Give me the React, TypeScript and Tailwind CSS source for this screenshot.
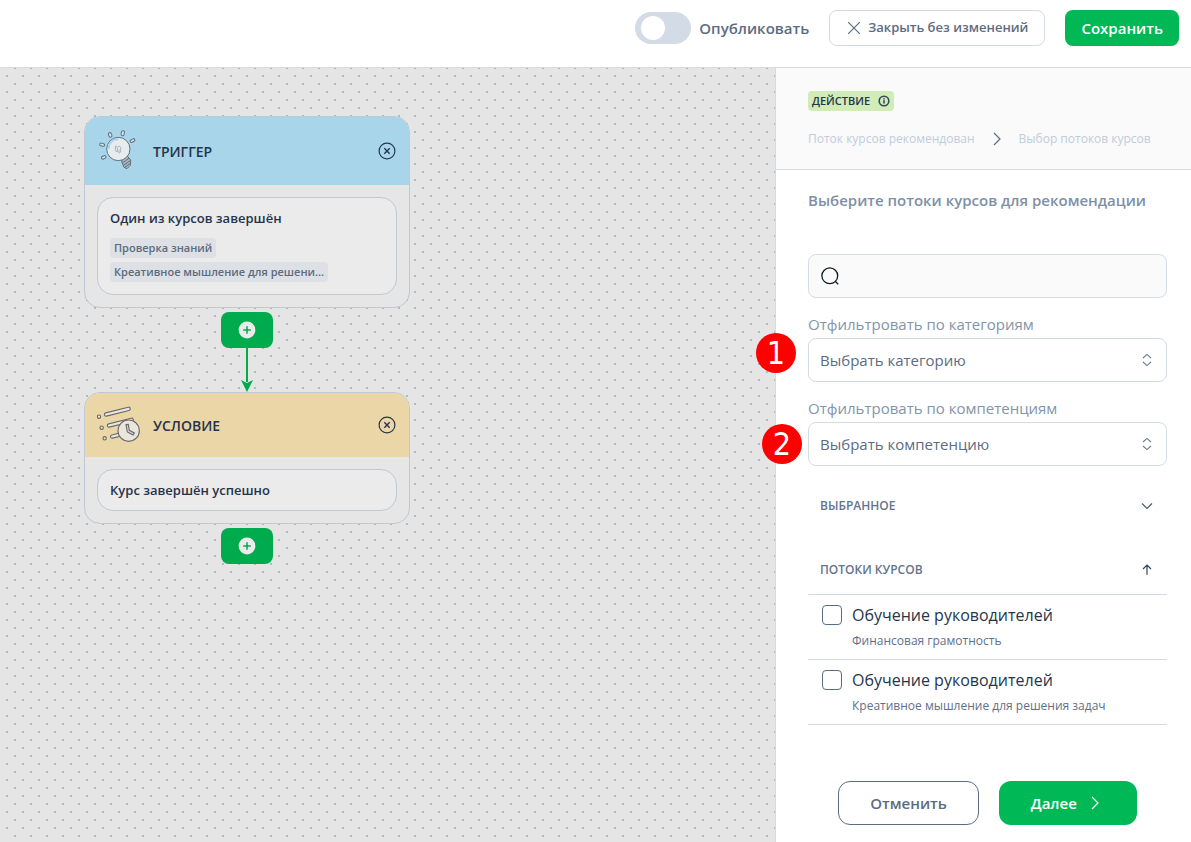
import { useState } from "react";
import type { ReactNode } from "react";

const CATEGORIES = ["Выбрать категорию"];
const COMPETENCIES = ["Выбрать компетенцию"];

const COURSE_FLOWS = [
  { id: "finance", title: "Обучение руководителей", course: "Финансовая грамотность" },
  { id: "creative", title: "Обучение руководителей", course: "Креативное мышление для решения задач" },
];

function BulbIcon() {
  return (
    <svg viewBox="51 57 132 132" className="h-11 w-11 shrink-0" fill="none" stroke="#5f7180" strokeWidth="3" aria-hidden="true">
      <path d="M124 152l18-14 10 12-1 16-10 10-9-4z" fill="#a9b4bc" />
      <path d="M127 159l20-14M130 166l21-14M134 172l17-12" />
      <circle cx="115" cy="117" r="35" fill="#e9ecee" />
      <path d="M86 117c0-18 11-29 29-29" stroke="#a9d5ea" strokeWidth="6" />
      <path d="M106 108l6 4v14l-6-4zM112 112l5-4 5 4v14l-5 4M117 119v10" stroke="#a2a8ad" strokeWidth="2.5" />
      <g fill="#d5e5ee">
        <rect x="86" y="68" width="9" height="14" rx="4.5" transform="rotate(-22 90 75)" />
        <rect x="124" y="62" width="9" height="15" rx="4.5" transform="rotate(12 128 69)" />
        <rect x="150" y="88" width="15" height="8" rx="4" transform="rotate(-28 157 92)" />
        <rect x="59" y="100" width="15" height="8" rx="4" transform="rotate(14 66 104)" />
        <rect x="64" y="138" width="14" height="8" rx="4" transform="rotate(-25 71 142)" />
      </g>
    </svg>
  );
}

function ClockIcon() {
  return (
    <svg viewBox="51 54 132 132" className="h-11 w-11 shrink-0" fill="#e9e6de" stroke="#6c6a66" strokeWidth="3.4" aria-hidden="true">
      <rect x="72" y="75" width="80" height="10" rx="5" transform="rotate(-14 112 80)" />
      <rect x="81" y="108" width="80" height="10" rx="5" transform="rotate(-14 121 113)" />
      <rect x="91" y="146" width="40" height="10" rx="5" transform="rotate(-14 111 151)" />
      <circle cx="57" cy="95" r="5" />
      <circle cx="65" cy="128" r="5" />
      <circle cx="74" cy="160" r="5" />
      <circle cx="146" cy="137" r="32" />
      <path d="M138 119l7-1 3 18 15 8-4 6-17-9z" fill="#d5d5d5" />
    </svg>
  );
}

function CloseCircleIcon() {
  return (
    <svg viewBox="0 0 20 20" className="h-5 w-5" fill="none" stroke="#26374b" strokeWidth="1.2" aria-hidden="true">
      <circle cx="10" cy="10" r="7.9" />
      <path d="M7.3 7.3l5.4 5.4M12.7 7.3l-5.4 5.4" strokeWidth="1.4" />
    </svg>
  );
}

function AddButton() {
  return (
    <button
      type="button"
      aria-label="Добавить"
      className="grid h-9 w-13 place-items-center rounded-lg bg-[#00ab4e]"
    >
      <svg viewBox="0 0 18 18" className="h-4.5 w-4.5" aria-hidden="true">
        <circle cx="9" cy="9" r="8.4" fill="#ebebeb" />
        <path d="M9 5.2v7.6M5.2 9h7.6" stroke="#00ab4e" strokeWidth="1.5" />
      </svg>
    </button>
  );
}

type NodeCardProps = {
  title: string;
  icon: ReactNode;
  headerClass: string;
  children: ReactNode;
};

function NodeCard({ title, icon, headerClass, children }: NodeCardProps) {
  return (
    <section className="w-full overflow-hidden rounded-2xl border border-[#bfc8d3] bg-[#e6e6e6]">
      <header className={`flex items-center gap-3 px-3 ${headerClass}`}>
        {icon}
        <h2 className="flex-1 pt-0.5 text-sm leading-5 font-semibold text-[#26334a]">{title}</h2>
        <button type="button" aria-label="Удалить">
          <CloseCircleIcon />
        </button>
      </header>
      <div className="p-3">
        <div className="rounded-2xl border border-[#bfc8d3] bg-[#ebebeb] px-3">{children}</div>
      </div>
    </section>
  );
}

function Canvas() {
  return (
    <main className="relative flex-1 bg-[#e5e5e5]">
      <svg className="absolute inset-0 h-full w-full" aria-hidden="true">
        <defs>
          <pattern id="dots" width="16" height="16" patternUnits="userSpaceOnUse">
            <path d="M6 7h2v2h-2zM14 15h2v1h-2zM14 0h2v1h-2z" fill="#aebac7" />
          </pattern>
        </defs>
        <rect width="100%" height="100%" fill="url(#dots)" />
      </svg>

      <div className="relative ml-21 flex w-[326px] flex-col items-center pt-12">
        <NodeCard title="ТРИГГЕР" icon={<BulbIcon />} headerClass="h-17 bg-[#a9d5ea]">
          <p className="pt-2.5 text-[13px] leading-5 font-semibold text-[#26334a]">Один из курсов завершён</p>
          <ul className="flex flex-col items-start gap-1 pt-2.5 pb-3 text-[11px] leading-5 font-semibold text-[#5b6b80]">
            <li className="rounded bg-[#dde0e5] px-1">Проверка знаний</li>
            <li className="rounded bg-[#dde0e5] px-1">Креативное мышление для решени...</li>
          </ul>
        </NodeCard>
        <div className="pt-1">
          <AddButton />
        </div>
        <svg viewBox="0 0 12 44" className="h-11 w-3" fill="#00ab4e" aria-hidden="true">
          <path d="M5 0h2v34h-2zM0 32l6 3 6-3-6 12z" />
        </svg>
        <NodeCard title="УСЛОВИЕ" icon={<ClockIcon />} headerClass="h-16 bg-[#ebd6a8]">
          <p className="py-2.5 text-[13px] leading-5 font-semibold text-[#26334a]">Курс завершён успешно</p>
        </NodeCard>
        <div className="pt-1">
          <AddButton />
        </div>
      </div>
    </main>
  );
}

type FilterSelectProps = {
  id: string;
  label: string;
  options: string[];
  marker: ReactNode;
};

function FilterSelect({ id, label, options, marker }: FilterSelectProps) {
  return (
    <div className="relative">
      <label htmlFor={id} className="block text-[15px] leading-7 text-[#8494a9]">
        {label}
      </label>
      <div className="relative">
        <select
          id={id}
          className="h-11 w-full appearance-none rounded-lg border border-[#d3dbe7] bg-white px-[11px] text-[15px] text-[#5b6c82]"
        >
          {options.map((option) => (
            <option key={option}>{option}</option>
          ))}
        </select>
        <svg
          viewBox="0 0 16 16"
          className="pointer-events-none absolute top-3.5 right-3 h-4 w-4"
          fill="none"
          stroke="#6b7b90"
          strokeWidth="1.1"
          aria-hidden="true"
        >
          <path d="M4 6l4-3.6L12 6M4 10l4 3.6 4-3.6" />
        </svg>
      </div>
      {marker}
    </div>
  );
}

const MARKER =
  "absolute h-10 w-10 rounded-full bg-[#fe0000] text-center font-['DejaVu_Sans_Condensed','DejaVu_Sans',sans-serif] text-[32px] leading-10 text-white";

function ActionPanel() {
  const [selected, setSelected] = useState<string[]>([]);

  const toggle = (id: string) =>
    setSelected((prev) => (prev.includes(id) ? prev.filter((item) => item !== id) : [...prev, id]));

  return (
    <aside className="relative flex w-[416px] shrink-0 flex-col border-l border-[#d3dbe7] bg-white">
      <div className="border-b border-[#d3dbe7] bg-[#fafafa] pt-[23px] pr-6 pb-5 pl-8">
        <div className="flex h-5 w-fit items-center gap-2 rounded bg-[#d0ecb8] px-1 text-[11px] font-semibold text-[#26334a]">
          ДЕЙСТВИЕ
          <svg viewBox="0 0 12 12" className="h-3 w-3" fill="none" stroke="#33485a" strokeWidth="1.6" aria-hidden="true">
            <circle cx="6" cy="6" r="4.8" />
            <path d="M6 5.2v3.4M6 3.2v1.2" />
          </svg>
        </div>
        <nav className="flex items-center gap-4 pt-[18px] text-xs leading-5 text-[#bfccdc]">
          <a href="#flow">Поток курсов рекомендован</a>
          <svg viewBox="0 0 12 16" className="h-4 w-3" fill="none" stroke="#5b6c82" strokeWidth="1.2" aria-hidden="true">
            <path d="M3 2l6 6-6 6" />
          </svg>
          <a href="#choose">Выбор потоков курсов</a>
        </nav>
      </div>

      <div className="flex-1 pt-[18px] pr-6 pl-8">
        <h1 className="text-[15px] leading-6 font-semibold text-[#7f90a6]">Выберите потоки курсов для рекомендации</h1>

        <div className="relative mt-[42px]">
          <svg
            viewBox="0 0 20 20"
            className="pointer-events-none absolute top-3 left-3 h-5 w-5"
            fill="none"
            stroke="#111820"
            strokeWidth="1.3"
            aria-hidden="true"
          >
            <circle cx="9.8" cy="9.8" r="7.9" />
            <path d="M15.2 15.2l3 3" />
          </svg>
          <input
            type="search"
            aria-label="Поиск"
            className="block h-11 w-full rounded-lg border border-[#d3dbe7] bg-[#fafafa] pr-3 pl-10 text-[15px]"
          />
        </div>

        <div className="flex flex-col gap-3 pt-3">
          <FilterSelect
            id="category"
            label="Отфильтровать по категориям"
            options={CATEGORIES}
            marker={<span className={`${MARKER} top-[23px] -left-13`}>1</span>}
          />
          <FilterSelect
            id="competency"
            label="Отфильтровать по компетенциям"
            options={COMPETENCIES}
            marker={<span className={`${MARKER} top-[30px] -left-[46px]`}>2</span>}
          />
        </div>

        <div className="pt-2 text-xs font-semibold text-[#64748a]">
          <button type="button" className="flex h-16 w-full items-center justify-between px-3">
            ВЫБРАННОЕ
            <svg viewBox="0 0 16 16" className="h-4 w-4" fill="none" stroke="#44566c" strokeWidth="1.1" aria-hidden="true">
              <path d="M3 5.5l5 5 5-5" />
            </svg>
          </button>
          <button type="button" className="flex h-14 w-full items-center justify-between px-3 pt-2">
            ПОТОКИ КУРСОВ
            <svg viewBox="0 0 16 16" className="h-4 w-4" fill="none" stroke="#33465c" strokeWidth="1.2" aria-hidden="true">
              <path d="M8 12.8V3M4 7l4-4 4 4" />
            </svg>
          </button>
        </div>

        <ul className="border-t border-[#d3dbe7]">
          {COURSE_FLOWS.map((flow) => (
            <li key={flow.id} className="border-b border-[#d3dbe7]">
              <label className="flex h-16 gap-2.5 pt-2.5 pl-3.5">
                <input
                  type="checkbox"
                  checked={selected.includes(flow.id)}
                  onChange={() => toggle(flow.id)}
                  className="h-5 w-5 shrink-0 appearance-none rounded border border-[#5b6c82] bg-white checked:bg-[#00b956]"
                />
                <span className="flex flex-col gap-1.5">
                  <span className="text-base leading-5 text-[#26364a]">{flow.title}</span>
                  <span className="text-xs leading-5 text-[#5f7087]">{flow.course}</span>
                </span>
              </label>
            </li>
          ))}
        </ul>
      </div>

      <div className="flex justify-center gap-5 pt-4 pr-6 pb-[17px] pl-8">
        <button
          type="button"
          className="h-11 rounded-xl border border-[#5b6c82] bg-white px-[31px] text-[15px] font-semibold text-[#5b6c82]"
        >
          Отменить
        </button>
        <button
          type="button"
          className="flex h-11 items-center gap-3 rounded-xl bg-[#00b956] pr-9 pl-8 text-[15px] font-semibold text-white"
        >
          Далее
          <svg viewBox="0 0 12 16" className="h-4 w-3" fill="none" stroke="currentColor" strokeWidth="1.2" aria-hidden="true">
            <path d="M3 2l6 6-6 6" />
          </svg>
        </button>
      </div>
    </aside>
  );
}

function TopBar() {
  const [published, setPublished] = useState(false);

  return (
    <header className="flex items-start justify-end gap-5 border-b border-[#d3dbe7] bg-white pt-2.5 pr-3 pb-[21px]">
      <label className="flex h-9 items-center gap-2 text-[15px] font-semibold text-[#5b6c82]">
        <input
          type="checkbox"
          role="switch"
          checked={published}
          onChange={(event) => setPublished(event.target.checked)}
          className="flex h-8 w-14 appearance-none items-center rounded-full bg-[#d3dbe7] px-1.5 before:h-6 before:w-6 before:rounded-full before:bg-white checked:justify-end checked:bg-[#00b956]"
        />
        Опубликовать
      </label>
      <button
        type="button"
        className="flex h-9 items-center gap-1.5 rounded-lg border border-[#d3dbe7] bg-white px-4 text-[13px] font-semibold text-[#5b6c82]"
      >
        <svg viewBox="0 0 16 16" className="h-4 w-4" fill="none" stroke="currentColor" strokeWidth="1.2" aria-hidden="true">
          <path d="M2.2 2.2l11.6 11.6M13.8 2.2L2.2 13.8" />
        </svg>
        Закрыть без изменений
      </button>
      <button type="button" className="h-9 rounded-lg bg-[#00b956] px-4 text-[15px] font-semibold text-white">
        Сохранить
      </button>
    </header>
  );
}

export default function App() {
  return (
    <div className="flex min-h-screen flex-col bg-white font-['Open_Sans',sans-serif]">
      <TopBar />
      <div className="flex flex-1">
        <Canvas />
        <ActionPanel />
      </div>
    </div>
  );
}
